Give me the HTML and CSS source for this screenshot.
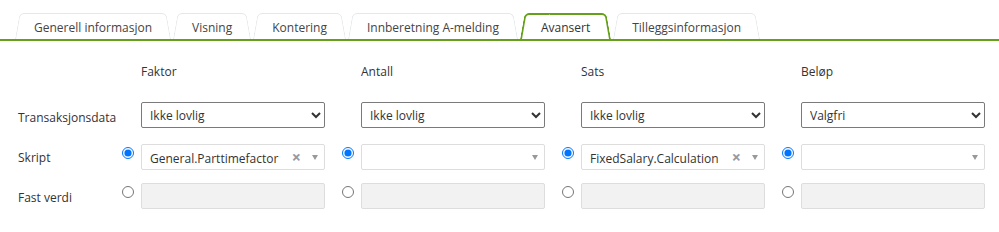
FILE: index.html
```html
<!DOCTYPE html>
<html>
<head>
	<meta charset="utf-8">
	<title>Avansert</title>
	<link rel="stylesheet" href="styles.css">
</head>
<body>
	<div class="tabs">
		<div class="tab">Generell informasjon</div>
		<div class="tab">Visning</div>
		<div class="tab">Kontering</div>
		<div class="tab">Innberetning A-melding</div>
		<div class="tab active">Avansert</div>
		<div class="tab">Tilleggsinformasjon</div>
	</div>

	<div class="form">
		<div class="lbl"></div>
		<div class="head">Faktor</div>
		<div class="head">Antall</div>
		<div class="head">Sats</div>
		<div class="head">Beløp</div>

		<div class="lbl">Transaksjonsdata</div>
		<div class="cell plain"><select><option>Ikke lovlig</option></select></div>
		<div class="cell plain"><select><option>Ikke lovlig</option></select></div>
		<div class="cell plain"><select><option>Ikke lovlig</option></select></div>
		<div class="cell plain"><select><option>Valgfri</option></select></div>

		<div class="lbl l2">Skript</div>
		<div class="cell">
			<input type="radio" name="r1" checked>
			<div class="s2"><span class="val">General.Parttimefactor</span><span class="clr">×</span><span class="arr"></span></div>
		</div>
		<div class="cell">
			<input type="radio" name="r2" checked>
			<div class="s2"><span class="val"></span><span class="arr"></span></div>
		</div>
		<div class="cell">
			<input type="radio" name="r3" checked>
			<div class="s2"><span class="val">FixedSalary.Calculation</span><span class="clr">×</span><span class="arr"></span></div>
		</div>
		<div class="cell">
			<input type="radio" name="r4" checked>
			<div class="s2"><span class="val"></span><span class="arr"></span></div>
		</div>

		<div class="lbl l3">Fast verdi</div>
		<div class="cell"><input type="radio" name="r1"><input type="text" class="txt" disabled></div>
		<div class="cell"><input type="radio" name="r2"><input type="text" class="txt" disabled></div>
		<div class="cell"><input type="radio" name="r3"><input type="text" class="txt" disabled></div>
		<div class="cell"><input type="radio" name="r4"><input type="text" class="txt" disabled></div>
	</div>
</body>
</html>
```

FILE: styles.css
```css
*{
	margin: 0;
	padding: 0;
	box-sizing: border-box;
}
body{
	font-family: "Open Sans", "Liberation Sans", sans-serif;
	font-size: 12px;
	color: #333;
	background: #fff;
}

/* faner */
.tabs{
	display: flex;
	gap: 2px;
	padding: 13px 0 0 15px;
	border-bottom: 2px solid #64a019;
}
.tab{
	position: relative;
	z-index: 0;
	height: 26px;
	line-height: 29px;
	padding: 0 19px;
	color: #444;
	white-space: nowrap;
}
.tab::before,
.tab::after{
	content: '';
	position: absolute;
	z-index: -1;
	top: 0;
	bottom: 0;
	width: 60%;
	background: #fff;
	border: 1px solid #e4e8eb;
	border-bottom: none;
	transform-origin: bottom;
}
.tab::before{
	left: 0;
	border-right: none;
	border-radius: 5px 0 0 0;
	transform: skewX(-10deg);
}
.tab::after{
	right: 0;
	border-left: none;
	border-radius: 0 5px 0 0;
	transform: skewX(10deg);
}
.tab.active{
	height: 28px;
	margin-bottom: -2px;
	padding: 0 21px;
	color: #333;
}
.tab.active::before,
.tab.active::after{
	border-color: #64a019;
	border-width: 2px;
	bottom: 2px;
}

/* skjema */
.form{
	display: grid;
	grid-template-columns: 104px repeat(4, 220px);
	grid-template-rows: 39px 42px 39px 26px;
	align-items: start;
	padding: 22px 0 0 18px;
}
.head{
	line-height: 18px;
	padding-left: 19px;
}
.lbl{
	line-height: 18px;
	padding-top: 7px;
}
.l2{
	padding-top: 5px;
}
.l3{
	padding-top: 6px;
}
.cell{
	display: flex;
	align-items: flex-start;
}
.cell.plain{
	padding-left: 19px;
}
.cell input[type=radio]{
	width: 12px;
	height: 12px;
	margin: 3px 7px 0 0;
	flex: none;
}
select{
	width: 184px;
	height: 26px;
	font-family: inherit;
	font-size: 12px;
	color: #333;
	padding-left: 4px;
	background: #fff;
	border: 1px solid #7a7a7a;
	border-radius: 2px;
}
.s2{
	display: flex;
	align-items: center;
	width: 184px;
	height: 26px;
	border: 1px solid #ddd;
	border-radius: 2px;
	background: #fff;
	padding: 2px 0 0 8px;
}
.s2 .val{
	flex: 1;
	white-space: nowrap;
}
.s2 .clr{
	color: #999;
	font-weight: bold;
	font-size: 16px;
	line-height: 16px;
	margin: 0 11px 2px 0;
}
.s2 .arr{
	width: 0;
	height: 0;
	border-left: 3px solid transparent;
	border-right: 3px solid transparent;
	border-top: 5px solid #999;
	margin: 0 6px 2px 0;
}
.txt{
	width: 184px;
	height: 26px;
	background: #f2f2f2;
	border: 1px solid #ddd;
	border-radius: 2px;
}
```
